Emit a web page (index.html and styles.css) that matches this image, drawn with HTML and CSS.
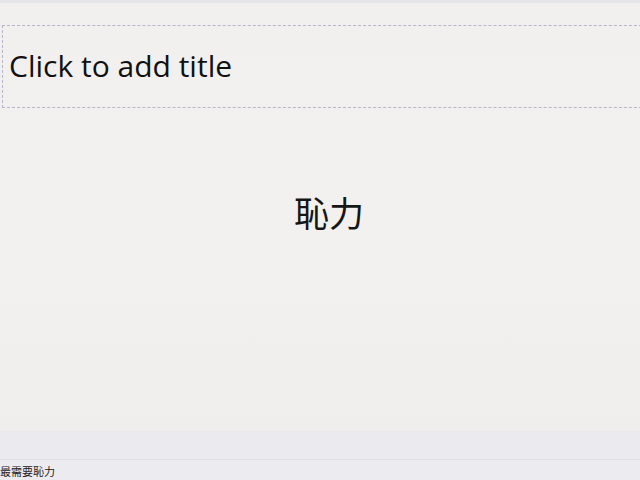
FILE: index.html
```html
<!DOCTYPE html>
<html>
<head>
<meta charset="utf-8">
<link rel="stylesheet" href="styles.css">
</head>
<body>
<div class="topstrip"></div>
<div class="slide">
  <div class="titlebox"><span class="title">Click to add title</span></div>
  <div class="content"><span class="cjk">恥力</span></div>
</div>
<div class="notes"></div>
<div class="statusbar"><span class="status">最需要恥力</span></div>
</body>
</html>
```
FILE: styles.css
```css
html, body {
  margin: 0;
  padding: 0;
  width: 640px;
  height: 480px;
  overflow: hidden;
}
body {
  display: flex;
  flex-direction: column;
  background: #f0efed;
}
.topstrip {
  height: 3px;
  background: #e5e5e9;
}
.slide {
  height: 428px;
  background: linear-gradient(180deg, #f1f0ee 0%, #f2f1ef 60%, #efeeec 100%);
  display: flex;
  flex-direction: column;
  padding-top: 22px;
  box-sizing: border-box;
}
.titlebox {
  margin-left: 2px;
  width: 660px;
  height: 83px;
  box-sizing: border-box;
  border: 1px dashed #b6b5cf;
  display: flex;
  align-items: center;
  padding-left: 6px;
}
.title {
  font-family: "Open Sans", Lato, sans-serif;
  font-size: 30px;
  font-variant-ligatures: none;
  color: #111;
  margin-top: -2px;
}
.content {
  display: flex;
  justify-content: center;
  padding-left: 18px;
  padding-top: 86px;
}
.cjk {
  font-family: "Noto Sans CJK TC", "Noto Sans CJK SC", sans-serif;
  font-size: 35px;
  line-height: 1;
  color: #161616;
}
.notes {
  height: 28px;
  background: #ebeaef;
  border-bottom: 1px solid #e1e0e6;
}
.statusbar {
  flex: 1;
  background: #ecebf0;
  display: flex;
  align-items: center;
}
.status {
  font-family: "Noto Sans CJK TC", sans-serif;
  font-size: 11px;
  color: #222;
  margin-left: 0;
  margin-top: 1px;
}
```
